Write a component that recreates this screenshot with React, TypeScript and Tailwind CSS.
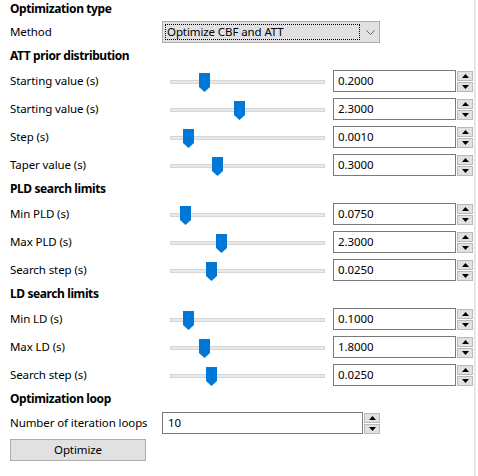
import React from 'react';

interface SliderRow {
  label: string;
  value: string;
  thumb: number;
}

const attRows: SliderRow[] = [
  { label: 'Starting value (s)', value: '0.2000', thumb: 29 },
  { label: 'Starting value (s)', value: '2.3000', thumb: 64 },
  { label: 'Step (s)', value: '0.0010', thumb: 13 },
  { label: 'Taper value (s)', value: '0.3000', thumb: 42 },
];

const pldRows: SliderRow[] = [
  { label: 'Min PLD (s)', value: '0.0750', thumb: 10 },
  { label: 'Max PLD (s)', value: '2.3000', thumb: 46 },
  { label: 'Search step (s)', value: '0.0250', thumb: 36 },
];

const ldRows: SliderRow[] = [
  { label: 'Min LD (s)', value: '0.1000', thumb: 13 },
  { label: 'Max LD (s)', value: '1.8000', thumb: 29 },
  { label: 'Search step (s)', value: '0.0250', thumb: 36 },
];

// Small up/down spinner, Windows style
const Spinner: React.FC = () => (
  <div className="flex flex-col gap-[1px] h-[22px] w-[16px] justify-center">
    <div className="h-[10px] w-[16px] bg-[#e1e1e1] border border-[#b9b9b9] flex items-center justify-center">
      <svg width="7" height="4" viewBox="0 0 7 4">
        <polygon points="0,4 7,4 3.5,0" fill="#000" />
      </svg>
    </div>
    <div className="h-[10px] w-[16px] bg-[#e1e1e1] border border-[#b9b9b9] flex items-center justify-center">
      <svg width="7" height="4" viewBox="0 0 7 4">
        <polygon points="0,0 7,0 3.5,4" fill="#000" />
      </svg>
    </div>
  </div>
);

const Header: React.FC<{ text: string; first?: boolean }> = ({ text, first }) => (
  <div className={`h-[16px] leading-[16px] font-bold text-[12px] tracking-[-0.4px] ${first ? 'mt-[1px]' : 'mt-[5px]'}`}>
    {text}
  </div>
);

const Row: React.FC<{ row: SliderRow }> = ({ row }) => (
  <div className="flex items-center h-[22px] mt-[6px]">
    <div className="w-[160px] shrink-0">{row.label}</div>
    {/* Slider */}
    <div className="relative w-[155px] h-[22px] shrink-0">
      <div className="absolute left-0 right-0 top-[10px] h-[4px] bg-[#e7eaea] border border-[#d6d6d6]" />
      <svg
        className="absolute top-[3px]"
        style={{ left: row.thumb }}
        width="11"
        height="19"
        viewBox="0 0 11 19"
      >
        <polygon points="0,0 11,0 11,14 5.5,19 0,14" fill="#0078d7" />
      </svg>
    </div>
    <div className="ml-[8px] w-[123px] h-[22px] border border-[#7a7a7a] bg-white pl-[4px] leading-[20px]">
      {row.value}
    </div>
    <div className="ml-[1px]">
      <Spinner />
    </div>
  </div>
);

export default function App() {
  return (
    <div
      className="flex w-[478px] h-[476px] bg-white text-black text-[11.5px] tracking-[-0.1px]"
      style={{ fontFamily: '"Noto Sans", "Segoe UI", sans-serif' }}
    >
      <div className="flex flex-col w-[474px] pl-[10px]">
        <Header text="Optimization type" first />
        <div className="flex items-center h-[22px] mt-[4px]">
          <div className="w-[152px] shrink-0">Method</div>
          <div className="flex items-center w-[218px] h-[22px] bg-[#e1e1e1] border border-[#adadad] pl-[2px]">
            <div className="w-[195px] h-[16px] border border-dotted border-black leading-[14px] pl-[1px]">
              Optimize CBF and ATT
            </div>
            <svg className="ml-[6px]" width="9" height="5" viewBox="0 0 9 5">
              <polyline points="0.5,0.5 4.5,4.5 8.5,0.5" fill="none" stroke="#606060" strokeWidth="1" />
            </svg>
          </div>
        </div>

        <Header text="ATT prior distribution" />
        {attRows.map((r, i) => (
          <Row key={i} row={r} />
        ))}

        <Header text="PLD search limits" />
        {pldRows.map((r, i) => (
          <Row key={i} row={r} />
        ))}

        <Header text="LD search limits" />
        {ldRows.map((r, i) => (
          <Row key={i} row={r} />
        ))}

        <Header text="Optimization loop" />
        <div className="flex items-center h-[22px] mt-[5px]">
          <div className="w-[152px] shrink-0">Number of iteration loops</div>
          <div className="w-[201px] h-[22px] border border-[#7a7a7a] bg-white pl-[5px] leading-[20px]">10</div>
          <div className="ml-[1px]">
            <Spinner />
          </div>
        </div>
        <button className="mt-[5px] w-[136px] h-[22px] bg-[#e1e1e1] border border-[#adadad] leading-[20px]">
          Optimize
        </button>
      </div>
      <div className="w-[1px] bg-[#e3e3e3]" />
      <div className="w-[1px] bg-[#ececec]" />
    </div>
  );
}
